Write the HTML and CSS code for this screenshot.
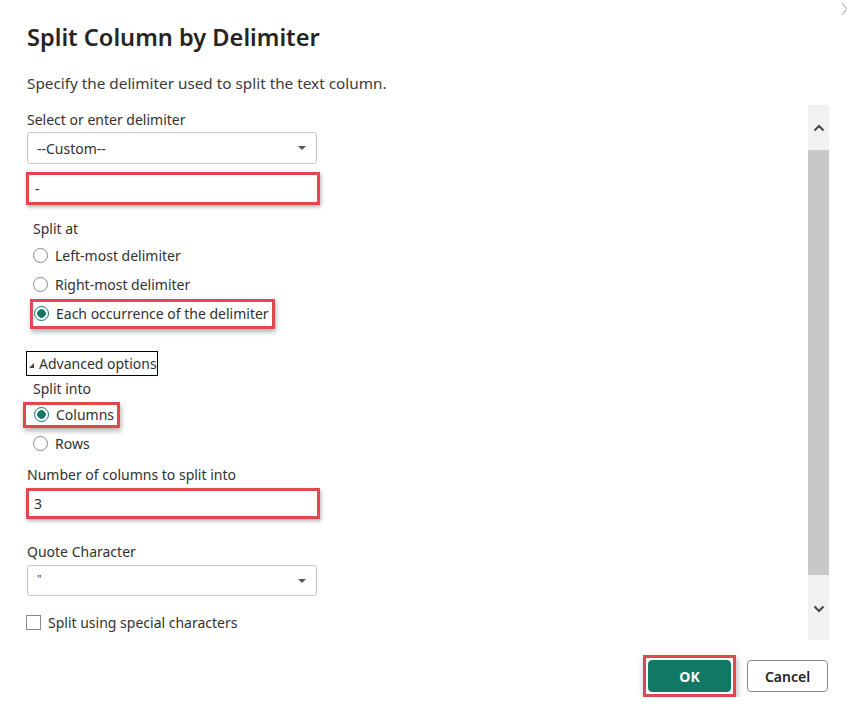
FILE: index.html
```html
<!DOCTYPE html>
<html lang="en">
<head>
    <meta charset="UTF-8">
    <title>Split Column by Delimiter</title>
    <link rel="stylesheet" href="styles.css">
</head>
<body>
    <div class="dialog">
        <svg class="close" width="8" height="14" viewBox="0 0 8 14"><path d="M1 1 L6 7 L1 13" fill="none" stroke="#bdbdbd" stroke-width="1.2"/></svg>
        <h1>Split Column by Delimiter</h1>
        <p class="intro">Specify the delimiter used to split the text column.</p>

        <div class="panel">
            <div class="form">
                <div class="label first">Select or enter delimiter</div>
                <div class="select">
                    <span>--Custom--</span>
                    <span class="caret"></span>
                </div>
                <div class="input hl-box">-</div>

                <div class="label sub split-at">Split at</div>
                <div class="radio-row"><span class="opt"><span class="radio"></span>Left-most delimiter</span></div>
                <div class="radio-row"><span class="opt"><span class="radio"></span>Right-most delimiter</span></div>
                <div class="radio-row"><span class="opt hl"><span class="radio checked"></span>Each occurrence of the delimiter</span></div>

                <div class="advanced"><span class="tri"></span>Advanced options</div>

                <div class="label sub split-into">Split into</div>
                <div class="radio-row"><span class="opt hl"><span class="radio checked"></span>Columns</span></div>
                <div class="radio-row"><span class="opt"><span class="radio"></span>Rows</span></div>

                <div class="label num-label">Number of columns to split into</div>
                <div class="input hl-box num">3</div>

                <div class="label quote-label">Quote Character</div>
                <div class="select quote">
                    <span class="quote-char">"</span>
                    <span class="caret"></span>
                </div>

                <div class="check-row"><span class="checkbox"></span>Split using special characters</div>
            </div>
            <div class="scrollbar">
                <div class="arrow"><svg width="12" height="8" viewBox="0 0 12 8"><path d="M1.5 6.5 L6 2 L10.5 6.5" fill="none" stroke="#444" stroke-width="2"/></svg></div>
                <div class="thumb"></div>
                <div class="arrow"><svg width="12" height="8" viewBox="0 0 12 8"><path d="M1.5 1.5 L6 6 L10.5 1.5" fill="none" stroke="#444" stroke-width="2"/></svg></div>
            </div>
        </div>

        <div class="footer">
            <span class="ok-wrap"><button class="btn primary">OK</button></span>
            <button class="btn">Cancel</button>
        </div>
    </div>
</body>
</html>
```
FILE: styles.css
```css
body {
    margin: 0;
    background: #fff;
    font-family: "Noto Sans", "Open Sans", sans-serif;
    color: #323130;
    font-size: 14px;
}
.dialog {
    position: relative;
    padding: 22px 18px 0 27px;
}
.close {
    position: absolute;
    top: 2px;
    right: -2px;
}
h1 {
    margin: 0;
    font-size: 23.6px;
    line-height: 30px;
    font-weight: 600;
    color: #252423;
}
.intro {
    margin: 21px 0 0;
    font-size: 15.3px;
    line-height: 20px;
    color: #3b3a39;
}
.panel {
    display: flex;
    margin-top: 12px;
    height: 535px;
}
.form {
    flex: 1;
}
.label {
    line-height: 20px;
    font-size: 14px;
}
.label.first {
    margin-top: 5px;
}
.label.sub {
    padding-left: 6px;
}
.select {
    box-sizing: border-box;
    width: 290px;
    height: 32px;
    margin-top: 2px;
    border: 1px solid #c8c6c4;
    border-radius: 3px;
    display: flex;
    align-items: center;
    justify-content: space-between;
    padding: 0 10px 0 9px;
    color: #323130;
}
.caret {
    width: 0;
    height: 0;
    border-left: 4px solid transparent;
    border-right: 4px solid transparent;
    border-top: 4px solid #555;
}
.input {
    box-sizing: border-box;
    width: 294px;
    height: 33px;
    margin-top: 8px;
    margin-left: -1px;
    padding-left: 6px;
    display: flex;
    align-items: center;
}
.hl-box {
    border: 3px solid #e0484d;
    box-shadow: 1px 2px 4px rgba(0, 0, 0, 0.3);
}
.split-at {
    margin-top: 14px;
}
.radio-row {
    height: 29px;
    display: flex;
    align-items: center;
}
.split-at + .radio-row {
    margin-top: 2px;
}
.opt {
    display: inline-flex;
    align-items: center;
    gap: 7px;
    height: 24px;
    padding: 0 3px 0 7px;
    margin-left: -1px;
}
.hl {
    margin-left: 6px;
    padding-left: 1px;
    box-shadow: 0 0 0 3px #e0484d, 1px 3px 5px 3px rgba(0, 0, 0, 0.3);
}
.radio {
    box-sizing: border-box;
    width: 15px;
    height: 15px;
    border: 1px solid #8a8886;
    border-radius: 50%;
    background: #fff;
}
.radio.checked {
    border-color: #117865;
    background: radial-gradient(circle, #117865 0 4px, #fff 4.5px);
}
.advanced {
    display: inline-flex;
    align-items: center;
    margin-top: 23px;
    margin-left: -1px;
    height: 25px;
    box-sizing: border-box;
    border: 1px solid #000;
    padding: 0 0 0 2px;
    color: #323130;
}
.tri {
    width: 0;
    height: 0;
    border-left: 5px solid transparent;
    border-bottom: 5px solid #444;
    margin-right: 5px;
    margin-top: 3px;
}
.split-into {
    margin-top: 3px;
}
.split-into + .radio-row {
    margin-top: 1px;
}
.split-into + .radio-row .opt {
    height: 20px;
    padding-right: 3px;
    margin-left: -1px;
    padding-left: 8px;
}
.num-label {
    margin-top: 7px;
}
.input.num {
    margin-top: 3px;
    height: 31px;
    padding-left: 5px;
}
.quote-label {
    margin-top: 23px;
}
.select.quote {
    height: 31px;
    margin-top: 3px;
}
.quote-char {
    font-size: 11px;
    align-self: flex-start;
    margin-top: 5px;
}
.check-row {
    display: flex;
    align-items: center;
    gap: 7px;
    margin-top: 16px;
    margin-left: -1px;
    height: 20px;
}
.checkbox {
    box-sizing: border-box;
    width: 15px;
    height: 15px;
    border: 1px solid #8a8886;
}
.scrollbar {
    width: 21px;
    display: flex;
    flex-direction: column;
    background: #f1f1f1;
}
.arrow {
    height: 45px;
    display: flex;
    align-items: center;
    justify-content: center;
}
.scrollbar .arrow:last-child {
    height: 65px;
    align-items: flex-start;
    padding-top: 30px;
    box-sizing: border-box;
}
.thumb {
    flex: 1;
    background: #c8c8c8;
}
.footer {
    display: flex;
    justify-content: flex-end;
    align-items: center;
    gap: 11px;
    margin-top: 15px;
    padding-right: 1px;
}
.ok-wrap {
    display: flex;
    border: 3px solid #e0484d;
    padding: 2px;
    box-shadow: 1px 3px 6px rgba(0, 0, 0, 0.3);
}
.btn {
    font-family: inherit;
    font-size: 14px;
    font-weight: 600;
    height: 32px;
    width: 81px;
    border: 1px solid #8a8886;
    border-radius: 4px;
    background: #fff;
    color: #252423;
}
.btn.primary {
    width: 83px;
    background: #117865;
    border-color: #117865;
    color: #fff;
    font-weight: 700;
}
```
